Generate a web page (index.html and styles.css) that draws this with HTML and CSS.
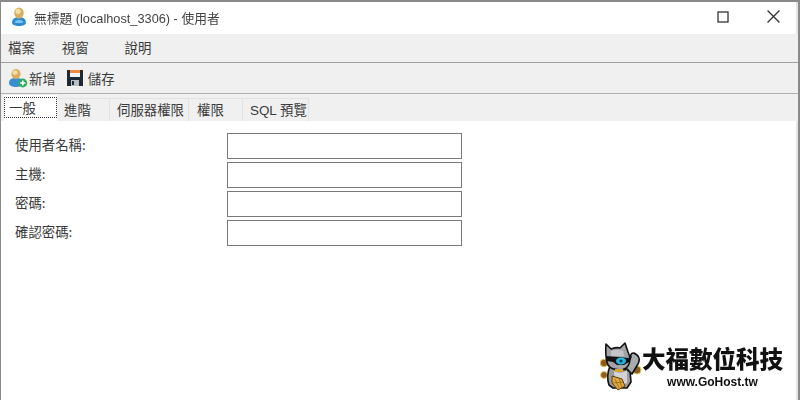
FILE: index.html
```html
<!DOCTYPE html>
<html lang="zh-Hant">
<head>
    <meta charset="UTF-8">
    <title>無標題 (localhost_3306) - 使用者</title>
    <link rel="stylesheet" href="styles.css">
</head>
<body>
    <div class="window">
        <div class="titlebar">
            <svg class="title-icon" width="16" height="19" viewBox="0 0 18 22">
                <path d="M1 18C1 14 4 12 9 12C14 12 17 14 17 18C17 21 13 22 9 22C5 22 1 21 1 18Z" fill="#2b8bd2"/>
                <path d="M4 18C4 16 6 15 9 15C12 15 14 16 14 18C12 19 6 19 4 18Z" fill="#7fc4ee"/>
                <ellipse cx="9" cy="7" rx="5.5" ry="6.5" fill="#d8ae60"/>
                <ellipse cx="8" cy="5" rx="3" ry="3" fill="#f3dfa8"/>
            </svg>
            <span class="title-text">無標題 (localhost_3306) - 使用者</span>
            <div class="win-btns">
                <span class="win-btn">
                    <svg width="12" height="12" viewBox="0 0 12 12"><rect x="1" y="1" width="10" height="10" fill="none" stroke="#333" stroke-width="1.3"/></svg>
                </span>
                <span class="win-btn">
                    <svg width="13" height="13" viewBox="0 0 12 12"><path d="M0.5 0.5L11.5 11.5M11.5 0.5L0.5 11.5" stroke="#333" stroke-width="1.2"/></svg>
                </span>
            </div>
        </div>
        <div class="menubar">
            <span class="menu-item">檔案</span>
            <span class="menu-item menu-view">視窗</span>
            <span class="menu-item menu-help">說明</span>
        </div>
        <div class="toolbar">
            <span class="tool">
                <svg width="20" height="20" viewBox="0 0 20 20">
                    <path d="M1 15C1 11 4 10 8 10C12 10 15 11 15 15C15 18 11 19 8 19C5 19 1 18 1 15Z" fill="#3a8fd0"/>
                    <ellipse cx="8" cy="6" rx="4.6" ry="5" fill="#d8ae60"/>
                    <ellipse cx="7" cy="4.5" rx="2.5" ry="2.2" fill="#f3dfa8"/>
                    <circle cx="14.8" cy="15" r="4.4" fill="#2cae57"/>
                    <path d="M14.8 12.4v5.2M12.2 15h5.2" stroke="#fff" stroke-width="1.6"/>
                </svg>
                新增
            </span>
            <span class="tool tool-save">
                <svg width="18" height="18" viewBox="0 0 18 18">
                    <rect x="1" y="1" width="16" height="16" fill="#1e2a33"/>
                    <rect x="4" y="1" width="10" height="3" fill="#f08a3c"/>
                    <rect x="4" y="4" width="10" height="4" fill="#f4f4f4"/>
                    <rect x="5" y="11" width="8" height="6" fill="#b8c0c6"/>
                    <rect x="6" y="12" width="2" height="4" fill="#1e2a33"/>
                </svg>
                儲存
            </span>
        </div>
        <div class="tabs">
            <span class="tab active"><span class="tab-focus">一般</span></span>
            <span class="tab tab-adv">進階</span>
            <span class="tab tab-srv">伺服器權限</span>
            <span class="tab tab-priv">權限</span>
            <span class="tab tab-sql">SQL 預覽</span>
        </div>
        <div class="form">
            <div class="row"><label>使用者名稱:</label><input type="text"></div>
            <div class="row"><label>主機:</label><input type="text"></div>
            <div class="row"><label>密碼:</label><input type="text"></div>
            <div class="row"><label>確認密碼:</label><input type="text"></div>
        </div>
    </div>
    <div class="brand">
        <svg class="cat" width="45" height="55" viewBox="0 0 45 55">
            <!-- coins -->
            <circle cx="7" cy="25" r="3.8" fill="#8a5d1c" stroke="#e8c45a"/>
            <circle cx="7" cy="37" r="3.4" fill="#8a5d1c" stroke="#e8c45a"/>
            <circle cx="40" cy="32" r="4" fill="#8a5d1c" stroke="#e8c45a"/>
            <!-- body -->
            <path d="M13 28Q9 38 12 47L16 50L30 50L34 44L33 33Z" fill="#9a9ca0" stroke="#111" stroke-width="1.6" stroke-linejoin="round"/>
            <path d="M17 33Q24 37 30 32L30 45Q24 49 18 46Z" fill="#d2d3d6"/>
            <!-- arm -->
            <path d="M29 30L34 19Q33 15 37 15L40 17Q44 20 41 26L35 36Z" fill="#a8aaae" stroke="#111" stroke-width="1.6" stroke-linejoin="round"/>
            <!-- head -->
            <path d="M9 6L14 11Q20 9 23 10L28 5L31 14Q34 20 32 26Q30 31 24 32Q14 32 11 27Q8 20 9 6Z" fill="#a2a4a8" stroke="#111" stroke-width="1.6" stroke-linejoin="round"/>
            <path d="M14 13Q20 11 26 13L27 18L14 18Z" fill="#c4c5c8"/>
            <!-- goggles -->
            <path d="M9 18L32 20L32 24L27 27L20 27L16 24L10 23Z" fill="#111"/>
            <ellipse cx="24" cy="23" rx="5" ry="3.4" fill="#25b6e2"/>
            <circle cx="24" cy="23" r="1.6" fill="#0e3a50"/>
            <!-- collar -->
            <rect x="18" y="31" width="8" height="3" fill="#dba42a"/>
            <!-- fan -->
            <path d="M15 38L25 41L28 48L21 52L15 45Z" fill="#e3a83c" stroke="#5a3a10"/>
            <path d="M18 41L22 50M22 40L25 50M16 45L26 44" stroke="#8a5d1c" stroke-width=".7"/>
        </svg>
        <div class="brand-text">
            <div class="brand-name">大福數位科技</div>
            <div class="brand-url">www.GoHost.tw</div>
        </div>
    </div>
</body>
</html>
```

FILE: styles.css
```css
*{
    margin: 0;
    padding: 0;
    box-sizing: border-box;
}
body{
    width: 800px;
    height: 400px;
    overflow: hidden;
    position: relative;
    background: #fff;
    font-family: "Noto Sans CJK TC", "Liberation Sans", sans-serif;
    font-size: 13.4px;
    color: #3a3a3a;
}
.window{
    width: 800px;
    height: 400px;
    border: 1px solid #8a8a8a;
    border-top-width: 2px;
    border-right-width: 2px;
    border-bottom: 0;
    display: flex;
    flex-direction: column;
    filter: blur(0.35px);
}
.titlebar{
    height: 32px;
    display: flex;
    align-items: center;
    padding-left: 10px;
    flex-shrink: 0;
    box-shadow: inset -2px 0 #e6e6e6;
}
.title-icon{
    margin-right: 7px;
    margin-top: -3px;
}
.title-text{
    font-size: 12.75px;
    color: #444;
    font-family: "Liberation Sans", "Noto Sans CJK TC", sans-serif;
    margin-top: -1px;
}
.win-btns{
    margin-left: auto;
    display: flex;
    gap: 4px;
    padding-right: 2px;
    margin-top: -3px;
}
.win-btn{
    width: 46px;
    height: 30px;
    display: flex;
    align-items: center;
    justify-content: center;
}
.menubar{
    height: 29px;
    background: #f0f0f0;
    border-bottom: 1px solid #a0a0a0;
    display: flex;
    align-items: center;
    padding: 0 0 2px 7px;
    flex-shrink: 0;
}
.menu-view{ margin-left: 27px; }
.menu-help{ margin-left: 36px; }
.toolbar{
    height: 31px;
    background: #f0f0f0;
    border-bottom: 1px solid #b0b0b0;
    display: flex;
    align-items: center;
    padding-left: 7px;
    flex-shrink: 0;
}
.tool{
    display: flex;
    align-items: center;
    gap: 1px;
}
.tool-save{
    margin-left: 10px;
    gap: 4px;
}
.tabs{
    height: 27px;
    background: #f0f0f0;
    display: flex;
    align-items: flex-end;
    padding-left: 3px;
    flex-shrink: 0;
}
.tab{
    height: 23px;
    border: 1px solid #e2e2e2;
    border-bottom: 0;
    border-left: 0;
    display: flex;
    align-items: center;
    padding-bottom: 2px;
}
.active{
    width: 53px;
    height: 26px;
    margin-right: 1px;
    background: #fff;
    border: 0;
    padding: 2px 0 3px 0;
}
.tab-focus{
    width: 100%;
    height: 100%;
    border: 1.5px dotted #333;
    line-height: 19px;
    padding-left: 4px;
}
.tab-adv{ width: 52px; padding-left: 6px; }
.tab-srv{ width: 79px; padding-left: 7px; }
.tab-priv{ width: 54px; padding-left: 8px; }
.tab-sql{ width: 66px; padding-left: 7px; font-family: "Liberation Sans", "Noto Sans CJK TC", sans-serif; }
.form{
    flex: 1;
    background: #fff;
    padding: 12px 0 0 14px;
    display: flex;
    flex-direction: column;
    gap: 3px;
    box-shadow: inset -2px 0 #e6e6e6;
}
.row{
    display: flex;
    align-items: center;
}
.row label{
    width: 212px;
    margin-top: -4px;
}
.row input{
    width: 235px;
    height: 26px;
    border: 1px solid #7a7a7a;
    background: #fff;
}
.brand{
    position: absolute;
    left: 597px;
    top: 338px;
    display: flex;
    align-items: flex-start;
    filter: blur(0.3px);
}
.brand-text{
    display: flex;
    flex-direction: column;
    align-items: center;
    color: #111;
    margin: 8px 0 0 0;
}
.brand-name{
    font-family: "Liberation Sans", "Noto Sans CJK TC", sans-serif;
    font-size: 23.5px;
    font-weight: 900;
    line-height: 28px;
}
.brand-url{
    font-size: 12px;
    font-weight: 700;
    line-height: 16px;
    font-family: "Liberation Sans", sans-serif;
}
```
